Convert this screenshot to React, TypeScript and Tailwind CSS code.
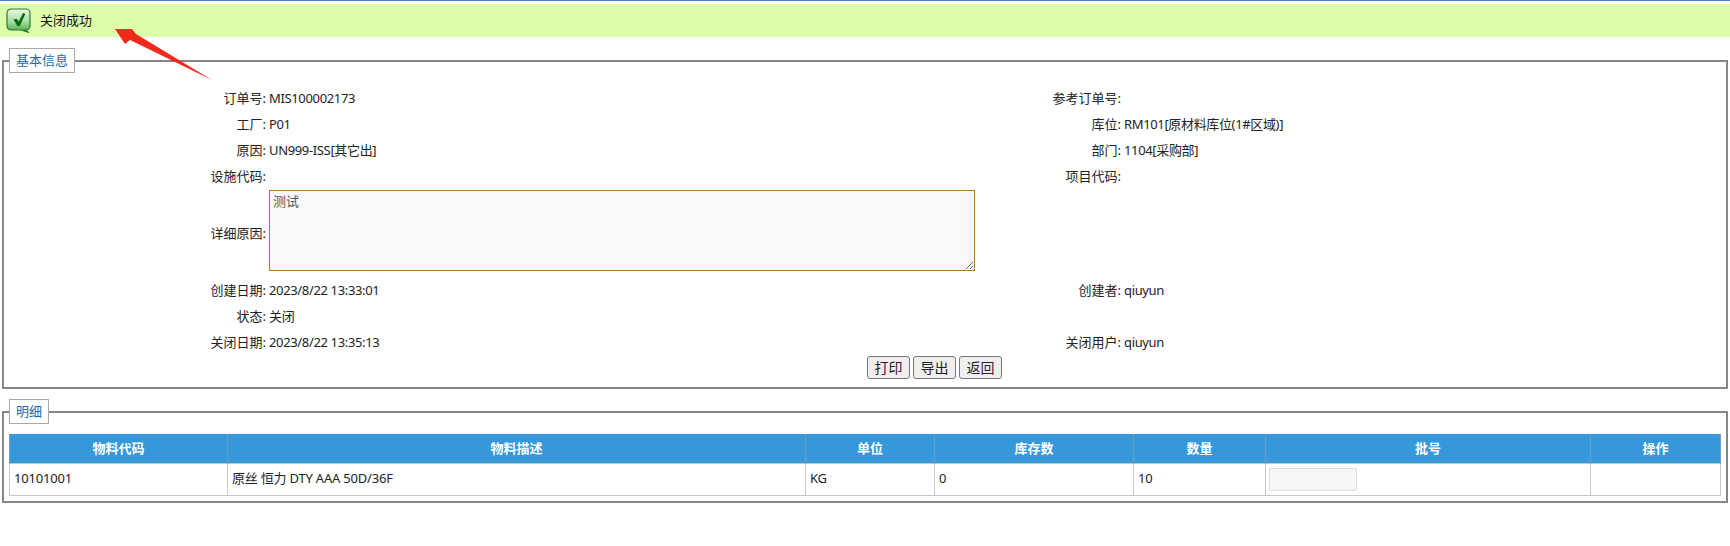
export default function App() {
  const Label = ({ children }: { children?: React.ReactNode }) => (
    <div className="flex h-[26px] items-center justify-end whitespace-nowrap">{children}</div>
  );
  const Value = ({ children }: { children?: React.ReactNode }) => (
    <div className="flex h-[26px] items-center pl-[3px] tracking-[-0.35px] whitespace-nowrap">{children}</div>
  );
  const columns = [
    ["物料代码", "w-[218px]"],
    ["物料描述", "w-[578px]"],
    ["单位", "w-[129px]"],
    ["库存数", "w-[199px]"],
    ["数量", "w-[132px]"],
    ["批号", "w-[325px]"],
    ["操作", "w-[130px]"],
  ];
  const btn =
    "h-[23px] w-[43px] rounded-[3px] border border-[#767676] bg-[#efefef] text-[14px] leading-none text-[#222]";
  const td = "h-[32px] border border-[#c8c8c8] px-[4px] py-0 text-left font-normal tracking-[-0.2px]";
  return (
    <div className="relative h-[546px] w-[1730px] overflow-hidden bg-white font-['Noto_Sans','Noto_Sans_CJK_SC',sans-serif] text-[13px] text-[#222]">
      <div className="h-[1px] bg-[#3f87b8]" />
      <div className="mt-[3px] flex h-[33px] items-center bg-[#ddffaa] pl-[6px]">
        <svg width="26" height="25" viewBox="0 0 26 25" className="shrink-0">
          <defs>
            <linearGradient id="g" x1="0" y1="0" x2="0" y2="1">
              <stop offset="0" stopColor="#eef9e8" />
              <stop offset="0.55" stopColor="#a5dc9c" />
              <stop offset="1" stopColor="#3fa544" />
            </linearGradient>
          </defs>
          <path
            d="M5 1h15a4 4 0 0 1 4 4v13a4 4 0 0 1-4 4h-1l4 2.5-8-2.5H5a4 4 0 0 1-4-4V5a4 4 0 0 1 4-4z"
            fill="url(#g)"
            stroke="#2a7a35"
            strokeWidth="1.2"
          />
          <path d="M7.5 11.5l3.2-.8 2 3L17 5l2.4.8L13.8 18h-2.4z" fill="#07690f" />
        </svg>
        <span className="ml-[8px] text-[#111]">关闭成功</span>
      </div>

      <fieldset className="mx-[2px] mt-[11px] h-[341px] border-2 border-[#868686]">
        <legend className="ml-[5px] flex h-[25px] w-[66px] items-center justify-center border border-[#a9a9a9] bg-white text-[#1f66b0]">
          基本信息
        </legend>
        <div className="grid grid-cols-[262px_710px_145px_1fr] pt-[13px]">
          <Label>订单号:</Label>
          <Value>MIS100002173</Value>
          <Label>参考订单号:</Label>
          <div className="h-[26px]" />
          <Label>工厂:</Label>
          <Value>P01</Value>
          <Label>库位:</Label>
          <Value>RM101[原材料库位(1#区域)]</Value>
          <Label>原因:</Label>
          <Value>UN999-ISS[其它出]</Value>
          <Label>部门:</Label>
          <Value>1104[采购部]</Value>
          <Label>设施代码:</Label>
          <div className="h-[26px]" />
          <Label>项目代码:</Label>
          <div className="h-[26px]" />
          <div className="flex h-[88px] items-center justify-end">详细原因:</div>
          <div className="pl-[3px]">
            <textarea
              readOnly
              defaultValue="测试"
              className="block h-[81px] w-[706px] border border-[#b5742b] bg-[#f9f9f9] px-[3px] py-[1px] text-[#555] outline-none"
            />
          </div>
          <div className="col-span-2" />
          <Label>创建日期:</Label>
          <Value>2023/8/22 13:33:01</Value>
          <Label>创建者:</Label>
          <Value>qiuyun</Value>
          <Label>状态:</Label>
          <Value>关闭</Value>
          <div className="col-span-2" />
          <Label>关闭日期:</Label>
          <Value>2023/8/22 13:35:13</Value>
          <Label>关闭用户:</Label>
          <Value>qiuyun</Value>
        </div>
        <div className="flex gap-[3px] pl-[863px]">
          <button className={btn}>打印</button>
          <button className={btn}>导出</button>
          <button className={btn}>返回</button>
        </div>
      </fieldset>

      <fieldset className="mx-[2px] mt-[10px] h-[104px] border-2 border-[#868686] px-[5px]">
        <legend className="flex h-[25px] w-[40px] items-center justify-center border border-[#a9a9a9] bg-white text-[#1f66b0]">
          明细
        </legend>
        <table className="mt-[10px] w-[1711px] table-fixed border-collapse">
          <thead>
            <tr className="h-[29px] bg-[#3498db] text-white">
              {columns.map(([name, width]) => (
                <th key={name} className={`${width} border-x border-[#6d9ec2] p-0 text-center font-bold`}>
                  {name}
                </th>
              ))}
            </tr>
          </thead>
          <tbody>
            <tr>
              <td className={td}>10101001</td>
              <td className={td}>原丝 恒力 DTY AAA 50D/36F</td>
              <td className={td}>KG</td>
              <td className={td}>0</td>
              <td className={td}>10</td>
              <td className={td}>
                <input
                  readOnly
                  className="-ml-[1px] block h-[23px] w-[88px] rounded-[2px] border border-[#dcdcdc] bg-[#f7f7f7] outline-none"
                />
              </td>
              <td className={td} />
            </tr>
          </tbody>
        </table>
      </fieldset>

      <svg width="110" height="60" viewBox="0 0 110 60" className="pointer-events-none absolute left-[110px] top-[25px]">
        <path d="M5 4L22 4 26 9 102 55 20 15 15 19z" fill="#f02a1c" />
      </svg>
    </div>
  );
}
